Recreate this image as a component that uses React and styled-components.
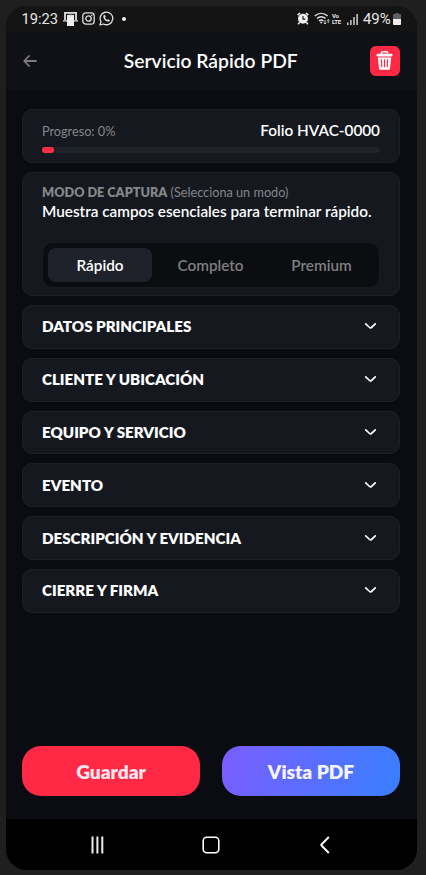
import React from 'react';
import styled, { createGlobalStyle } from 'styled-components';

const GlobalStyle = createGlobalStyle`
  * {
    box-sizing: border-box;
  }

  body {
    margin: 0;
    background: #1f1f1f;
    font-family: Lato, 'Open Sans', sans-serif;
  }

  button {
    padding: 0;
    border: 0;
    background: none;
    color: inherit;
    font-family: inherit;
  }

  svg {
    display: block;
    flex: none;
  }
`;

const Frame = styled.div`
  height: 875px;
  padding: 6px 9.5px 5px 5.5px;
  background: #1f1f1f;
`;

const Phone = styled.div`
  display: flex;
  flex-direction: column;
  height: 864px;
  overflow: hidden;
  border-radius: 21px;
  background: #0b0c11;
  color: #fff;
`;

const StatusBar = styled.div`
  display: flex;
  justify-content: space-between;
  height: 25px;
  padding: 0 15.5px 0 16px;
  background: #141414;
  color: #e6e6e6;
  font-family: Roboto, sans-serif;
  font-size: 14.7px;
  line-height: 26px;
`;

const StatusGroup = styled.div`
  display: flex;
  align-items: center;
`;

const Clock = styled.span`
  width: 41px;
`;

const Battery = styled.span`
  width: 30px;
  font-size: 15px;
  letter-spacing: -0.1px;
`;

const Header = styled.header`
  display: grid;
  grid-template-columns: 30px 1fr 30px;
  align-items: center;
  height: 59px;
  padding: 0 17px 0 16.5px;
  background: #101116;
`;

const Title = styled.h1`
  margin: 1px 0 0;
  font-size: 19.3px;
  font-weight: 600;
  line-height: 24px;
  text-align: center;
`;

const BackButton = styled.button`
  padding-left: 1px;
  color: #7c7c80;
`;

const DeleteButton = styled.button`
  display: flex;
  align-items: center;
  justify-content: center;
  height: 30px;
  border-radius: 6px;
  background: #ff2945;
`;

const Content = styled.main`
  display: flex;
  flex: 1;
  flex-direction: column;
  gap: 9px;
  padding: 19px 16.5px 0;
`;

const Card = styled.section`
  padding: 0 19px;
  border: 1px solid #1d2026;
  border-radius: 10px;
  background: #15181f;
`;

const ProgressCard = styled(Card)`
  height: 54px;
  padding-top: 10px;
`;

const ProgressRow = styled.div`
  display: flex;
  justify-content: space-between;
  height: 20px;
  margin-bottom: 7px;
`;

const ProgressLabel = styled.span`
  padding-top: 2px;
  color: #85868a;
  font-size: 12.7px;
  line-height: 18px;
`;

const Folio = styled.span`
  font-size: 15.3px;
  font-weight: 600;
  line-height: 20px;
`;

const ProgressTrack = styled.div`
  height: 6px;
  border-radius: 3px;
  background: #20222a;
`;

const ProgressFill = styled.div`
  width: 12px;
  height: 6px;
  border-radius: 3px;
  background: #ff2e44;
`;

const ModeCard = styled(Card)`
  height: 124px;
  padding-top: 11px;
`;

const ModeLabel = styled.div`
  color: #85868a;
  font-size: 12.7px;
  line-height: 17px;
  white-space: nowrap;

  strong {
    font-weight: 800;
  }
`;

const ModeHint = styled.p`
  margin: 0 0 21px;
  font-size: 15.3px;
  font-weight: 600;
  line-height: 20px;
  white-space: nowrap;
`;

const Segmented = styled.div`
  display: grid;
  grid-template-columns: 104px 1fr 1fr;
  gap: 6px;
  height: 46px;
  padding: 5px;
  border: 1px solid #1a1b20;
  border-radius: 11px;
  background: #0c0d10;
`;

const Segment = styled.button`
  height: 34px;
  border-radius: 8px;
  background: ${(props) => (props.$active ? '#20222b' : 'transparent')};
  color: ${(props) => (props.$active ? '#fff' : '#7e7f82')};
  font-size: 15.3px;
  font-weight: 600;
`;

const SectionRow = styled(Card)`
  display: flex;
  align-items: center;
  justify-content: space-between;
  height: 43.8px;
  padding-right: 22px;
  padding-bottom: 1px;
`;

const SectionTitle = styled.h2`
  margin: 0;
  font-size: 15.15px;
  font-weight: 800;
  line-height: 20px;
`;

const Actions = styled.div`
  display: grid;
  grid-template-columns: 1fr 1fr;
  gap: 22px;
  padding: 0 16.5px 23px;
`;

const ActionButton = styled.button`
  height: 50px;
  border-radius: 19px;
  background: ${(props) =>
    props.$gradient ? 'linear-gradient(105deg, #7b5cff, #387fff)' : '#ff2945'};
  color: ${(props) => (props.$gradient ? '#f6f5ff' : '#ffe6ef')};
  font-size: 19.1px;
  font-weight: 800;
`;

const NavBar = styled.nav`
  display: grid;
  grid-template-columns: repeat(3, 113.5px);
  justify-content: center;
  align-items: center;
  height: 51px;
  background: #000;

  svg {
    margin: 0 auto;
  }
`;

const PrinterIcon = () => (
  <svg width="15" height="16" viewBox="0 0 15 16" fill="none">
    <path d="M2 9V1.800h11V9" stroke="#e0e0e0" strokeWidth="1.800" />
    <path d="M0 9.800h4m7 0h4" stroke="#e0e0e0" strokeWidth="1.200" />
    <path d="M4 4h7v11H4z" fill="#eee" />
    <path d="M5.500 3.700h4" stroke="#777" />
  </svg>
);

const InstagramIcon = () => (
  <svg width="13" height="13" viewBox="0 0 13 13" fill="none" stroke="#e0e0e0" strokeWidth="1.300">
    <rect x=".8" y=".8" width="11.400" height="11.400" rx="3.200" />
    <circle cx="6.500" cy="6.500" r="2.700" />
    <circle cx="9.800" cy="3.300" r=".8" fill="#e0e0e0" stroke="none" />
  </svg>
);

const WhatsAppIcon = () => (
  <svg width="15" height="15" viewBox="0 0 15 15" fill="none">
    <path
      d="M1 14l1-3.400A6.300 6.300 0 1 1 4.500 13L1 14z"
      stroke="#e0e0e0"
      strokeWidth="1.300"
      strokeLinejoin="round"
    />
    <path
      d="M5.500 4.100c-.8.1-1.300.9-1.200 1.800.3 2.200 2.200 4.200 4.500 4.700 1 .2 2-.4 2.100-1.400l-1.700-1-.9.8C7.200 8.500 6.400 7.700 6 6.700l.7-.9-.7-1.700z"
      fill="#e0e0e0"
    />
  </svg>
);

const AlarmIcon = () => (
  <svg width="12" height="13" viewBox="0 0 12 13" fill="none">
    <path d="M.7 3.200L3 1m8.300 2.200L9 1M2.500 10.500l-1.300 1.700m8.300-1.700l1.300 1.700" stroke="#eee" strokeWidth="1.600" />
    <circle cx="6" cy="6.800" r="5" fill="#eee" />
    <path d="M6 3.900v3.200h2.300" stroke="#141414" strokeWidth="1.100" />
  </svg>
);

const WifiIcon = () => (
  <svg width="16" height="13" viewBox="0 0 16 13" fill="none" stroke="#e0e0e0">
    <path d="M.7 4.100c4-3.700 9-3.700 13 0M2.900 6.600c2.700-2.400 5.900-2.400 8.600 0M5 9c1.300-1.200 3.100-1.200 4.400 0" strokeWidth="1.400" />
    <circle cx="7.200" cy="10.600" r="1" fill="#e0e0e0" stroke="none" />
    <path d="M11 8v4M9.700 10.700l1.300 1.300 1.300-1.300M14.200 11V7.500m-1.200 1.200l1.200-1.200 1.200 1.200" strokeWidth=".9" />
  </svg>
);

const VoLteLabel = styled.span`
  display: flex;
  flex-direction: column;
  width: 14.5px;
  font-size: 6px;
  font-weight: 700;
  line-height: 6px;
  letter-spacing: -0.3px;
`;

const SignalIcon = () => (
  <svg width="11" height="12" viewBox="0 0 11 12" stroke="#e0e0e0" strokeWidth="1.400">
    <path d="M.8 9.500V12M3.900 7v5M7 4v8M10.100 1v11" />
  </svg>
);

const BatteryIcon = () => (
  <svg width="8" height="12" viewBox="0 0 8 12">
    <path d="M2.500 0h3v1H7q1 0 1 1v4H0V2q0-1 1-1h1.500z" fill="#606060" />
    <path d="M0 6h8v5q0 1-1 1H1q-1 0-1-1z" fill="#eee" />
  </svg>
);

const ArrowLeftIcon = () => (
  <svg width="14" height="12" viewBox="0 0 14 12" fill="none" stroke="currentColor" strokeWidth="1.800">
    <path d="M13 6H1.500M6 1L1.200 6 6 11" strokeLinecap="round" strokeLinejoin="round" />
  </svg>
);

const TrashIcon = () => (
  <svg width="17" height="19" viewBox="0 0 17 19" fill="none">
    <path d="M5.500 3V1.500q0-.7.7-.7h4.600q.7 0 .7.7V3" stroke="#fff" strokeWidth="1.500" />
    <rect x=".5" y="2.700" width="16" height="2.800" rx="1" fill="#fff" />
    <path d="M1.800 6.500h13.400L14 17.500q-.1 1.300-1.400 1.300H4.400Q3.100 18.800 3 17.500z" fill="#fff" />
    <path d="M5.400 8.300l.4 8M8.500 8.300v8M11.600 8.300l-.4 8" stroke="#ff2945" strokeWidth="1.200" />
  </svg>
);

const ChevronIcon = () => (
  <svg width="13" height="8" viewBox="0 0 13 8" fill="none" stroke="#fff" strokeWidth="1.700">
    <path d="M1.700 1.900L5.600 5.500q.9.800 1.800 0l3.900-3.600" strokeLinecap="round" strokeLinejoin="round" />
  </svg>
);

const RecentsIcon = () => (
  <svg width="14" height="18" viewBox="0 0 14 18" stroke="#eee" strokeWidth="2">
    <path d="M1.500 .5v17M6.400 .5v17M11.300 .5v17" />
  </svg>
);

const HomeIcon = () => (
  <svg width="18" height="18" viewBox="0 0 18 18" fill="none" stroke="#fff" strokeWidth="1.600">
    <rect x="1.200" y="1.200" width="15.600" height="15.600" rx="3.500" />
  </svg>
);

const NavBackIcon = () => (
  <svg width="10" height="18" viewBox="0 0 10 18" fill="none" stroke="#fff" strokeWidth="1.900">
    <path d="M8.800 1L1.500 8.500q-.5.500 0 1L8.800 17" />
  </svg>
);

const StatusIcon = styled.span`
  display: block;
  margin-right: ${(props) => props.$gap}px;
`;

const Dot = styled.span`
  width: 4px;
  height: 4px;
  border-radius: 50%;
  background: #eee;
`;

const modes = ['Rápido', 'Completo', 'Premium'];

const sections = [
  'DATOS PRINCIPALES',
  'CLIENTE Y UBICACIÓN',
  'EQUIPO Y SERVICIO',
  'EVENTO',
  'DESCRIPCIÓN Y EVIDENCIA',
  'CIERRE Y FIRMA',
];

const App = () => {
  return (
    <Frame>
      <GlobalStyle />
      <Phone>
        <StatusBar>
          <StatusGroup>
            <Clock>19:23</Clock>
            <StatusIcon $gap={4}>
              <PrinterIcon />
            </StatusIcon>
            <StatusIcon $gap={4}>
              <InstagramIcon />
            </StatusIcon>
            <StatusIcon $gap={8}>
              <WhatsAppIcon />
            </StatusIcon>
            <Dot />
          </StatusGroup>
          <StatusGroup>
            <StatusIcon $gap={5}>
              <AlarmIcon />
            </StatusIcon>
            <StatusIcon $gap={2.5}>
              <WifiIcon />
            </StatusIcon>
            <VoLteLabel>
              <span>Vo</span>
              <span>LTE</span>
            </VoLteLabel>
            <StatusIcon $gap={5.5}>
              <SignalIcon />
            </StatusIcon>
            <Battery>49%</Battery>
            <BatteryIcon />
          </StatusGroup>
        </StatusBar>
        <Header>
          <BackButton aria-label="Volver">
            <ArrowLeftIcon />
          </BackButton>
          <Title>Servicio Rápido PDF</Title>
          <DeleteButton aria-label="Eliminar">
            <TrashIcon />
          </DeleteButton>
        </Header>
        <Content>
          <ProgressCard>
            <ProgressRow>
              <ProgressLabel>Progreso: 0%</ProgressLabel>
              <Folio>Folio HVAC-0000</Folio>
            </ProgressRow>
            <ProgressTrack>
              <ProgressFill />
            </ProgressTrack>
          </ProgressCard>
          <ModeCard>
            <ModeLabel>
              <strong>MODO DE CAPTURA</strong> (Selecciona un modo)
            </ModeLabel>
            <ModeHint>Muestra campos esenciales para terminar rápido.</ModeHint>
            <Segmented>
              {modes.map((mode, i) => (
                <Segment key={mode} $active={i === 0}>
                  {mode}
                </Segment>
              ))}
            </Segmented>
          </ModeCard>
          {sections.map((name) => (
            <SectionRow key={name}>
              <SectionTitle>{name}</SectionTitle>
              <ChevronIcon />
            </SectionRow>
          ))}
        </Content>
        <Actions>
          <ActionButton>Guardar</ActionButton>
          <ActionButton $gradient>Vista PDF</ActionButton>
        </Actions>
        <NavBar>
          <RecentsIcon />
          <HomeIcon />
          <NavBackIcon />
        </NavBar>
      </Phone>
    </Frame>
  );
};

export default App;
